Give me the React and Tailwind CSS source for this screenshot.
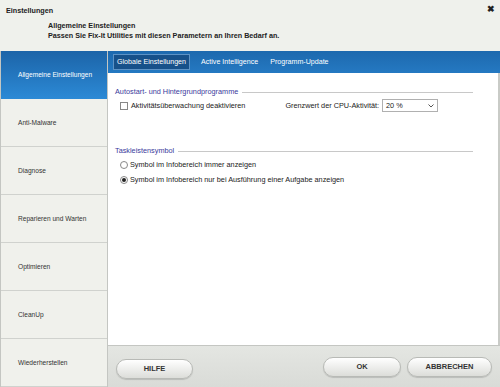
import { useState } from 'react';

const navItems = [
  'Allgemeine Einstellungen',
  'Anti-Malware',
  'Diagnose',
  'Reparieren und Warten',
  'Optimieren',
  'CleanUp',
  'Wiederherstellen',
];

const tabs = ['Globale Einstellungen', 'Active Intelligence', 'Programm-Update'];

function Legend({ title }) {
  return (
    <div className="flex h-[10px] items-center gap-1">
      <span className="text-[#3a3a9c]">{title}</span>
      <div className="h-px flex-1 bg-[#c8c8c8]" />
    </div>
  );
}

function PillButton({ children }) {
  return (
    <button className="h-[20px] rounded-full border border-[#b8bab6] bg-gradient-to-b from-white to-[#dcddd9] text-[7.5px] font-bold text-[#333] shadow-[0_1px_1px_rgba(0,0,0,0.15)]">
      {children}
    </button>
  );
}

export default function App() {
  const [active, setActive] = useState(0);
  const [tab, setTab] = useState(0);
  const [radio, setRadio] = useState(1);

  return (
    <div className="flex h-[387px] w-[500px] flex-col overflow-hidden whitespace-nowrap bg-[#eff1ec] font-['Liberation_Sans',Arial,sans-serif] text-[#222]">
      {/* header */}
      <div className="relative h-[51px] shrink-0">
        <div className="pl-[6px] pt-[6px] text-[7.2px] font-bold">Einstellungen</div>
        <div className="pl-[48px] pt-[4px] text-[7.2px] font-bold leading-[10px]">
          <div>Allgemeine Einstellungen</div>
          <div>Passen Sie Fix-It Utilities mit diesen Parametern an Ihren Bedarf an.</div>
        </div>
        <span className="absolute right-[5px] top-[3px] text-[9px] font-bold text-[#222]">✖</span>
      </div>

      <div className="flex min-h-0 flex-1">
        {/* sidebar */}
        <div className="flex w-[108px] shrink-0 flex-col border-l border-r border-[#c4c6c2]">
          {navItems.map((item, i) => (
            <button
              key={item}
              onClick={() => setActive(i)}
              className={
                i === active
                  ? 'flex h-[48px] items-center bg-gradient-to-b from-[#1c64a8] to-[#2c8ad6] pl-[17px] text-left text-[6.6px] text-white'
                  : 'flex h-[48px] items-center border-b border-[#d0d2ce] bg-[#f0f1ec] pl-[17px] text-left text-[6.6px] text-[#333]'
              }
            >
              {item}
            </button>
          ))}
        </div>

        {/* main */}
        <div className="flex min-w-0 flex-1 flex-col">
          <div className="flex h-[22px] shrink-0 items-center gap-[10px] bg-gradient-to-b from-[#1d69ae] to-[#2579c2] pl-[5px] text-[7.1px] text-white">
            {tabs.map((t, i) => (
              <button
                key={t}
                onClick={() => setTab(i)}
                className={
                  i === tab
                    ? 'border border-[#5d93c6] bg-[#17518a] px-[3px] py-[2px]'
                    : 'px-[1px] py-[2px]'
                }
              >
                {t}
              </button>
            ))}
          </div>

          <div className="flex-1 border-r-2 border-[#c9cbc7] bg-white pl-[7px] pr-[25px] pt-[14px] text-[7.3px] leading-[10px]">
            <Legend title="Autostart- und Hintergrundprogramme" />
            <div className="mt-[2px] flex h-[13px] items-center pl-[5px]">
              <label className="flex items-center gap-[3px]">
                <span className="h-[8px] w-[8px] border border-[#888] bg-white" />
                <span>Aktivitätsüberwachung deaktivieren</span>
              </label>
              <span className="ml-[40px]">Grenzwert der CPU-Aktivität:</span>
              <div className="ml-[3px] flex h-[13px] w-[56px] items-center justify-between border border-[#b0b0b0] px-[3px]">
                <span>20 %</span>
                <svg width="6" height="4" viewBox="0 0 6 4">
                  <path d="M0.5 0.5 L3 3 L5.5 0.5" fill="none" stroke="#555" strokeWidth="1" />
                </svg>
              </div>
            </div>

            <div className="mt-[34px]">
              <Legend title="Taskleistensymbol" />
            </div>
            <div className="mt-[4px] flex flex-col gap-[5px] pl-[5px]">
              {[
                'Symbol im Infobereich immer anzeigen',
                'Symbol im Infobereich nur bei Ausführung einer Aufgabe anzeigen',
              ].map((label, i) => (
                <label key={label} className="flex h-[10px] items-center gap-[2px]" onClick={() => setRadio(i)}>
                  <span className="flex h-[8px] w-[8px] items-center justify-center rounded-full border border-[#888] bg-white">
                    {radio === i && <span className="h-[4px] w-[4px] rounded-full bg-[#222]" />}
                  </span>
                  <span>{label}</span>
                </label>
              ))}
            </div>
          </div>

          <div className="flex h-[42px] shrink-0 items-center border-t border-[#c4c6c2] bg-gradient-to-b from-[#e4e6e2] to-[#d9dbd7] px-[8px]">
            <div className="w-[77px]">
              <PillButton>
                <span className="block w-[75px]">HILFE</span>
              </PillButton>
            </div>
            <div className="ml-auto flex gap-[6px]">
              <PillButton>
                <span className="block w-[76px]">OK</span>
              </PillButton>
              <PillButton>
                <span className="block w-[83px]">ABBRECHEN</span>
              </PillButton>
            </div>
          </div>
        </div>
      </div>
    </div>
  );
}
